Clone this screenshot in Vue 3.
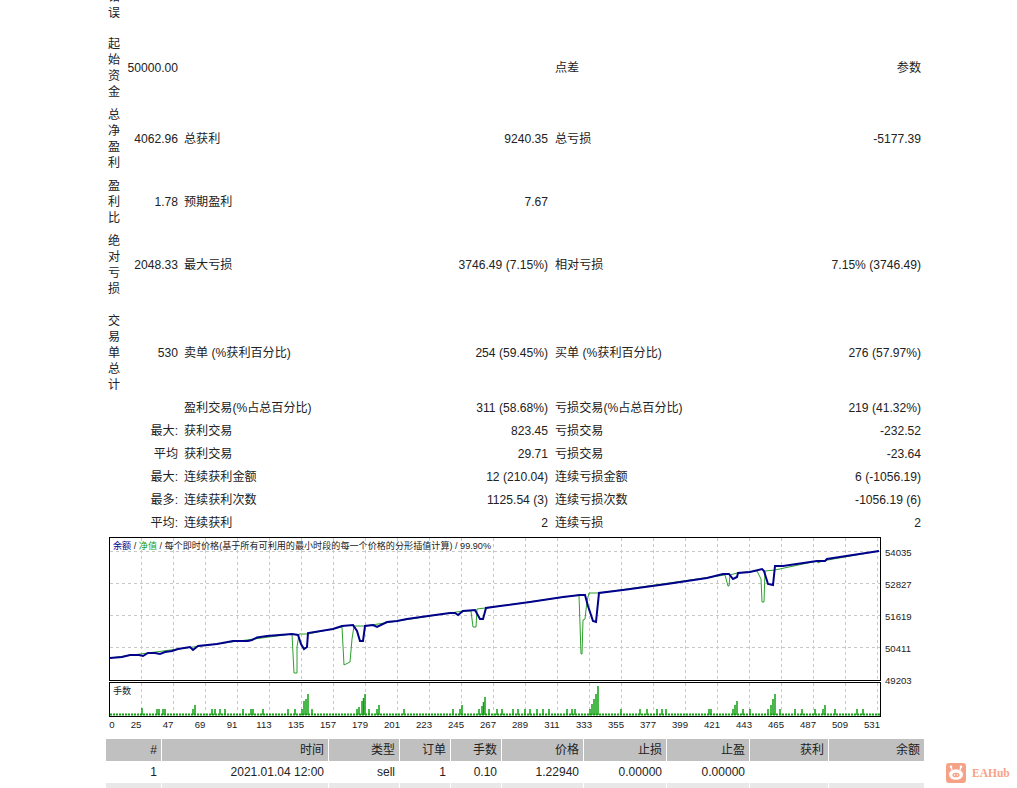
<template>
  <div class="page">
    <table class="stats">
      <colgroup>
        <col style="width: 16px" />
        <col style="width: 59px" />
        <col style="width: 371px" />
        <col />
      </colgroup>
      <tbody>
        <tr>
          <td class="label"><span v-for="c in '错误'" :key="c">{{ c }}</span></td>
          <td colspan="3"></td>
        </tr>
        <template v-for="row in tallRows" :key="row.label">
          <tr class="spacer" v-if="row.gap"><td colspan="4" :style="{ height: row.gap + 'px' }"></td></tr>
          <tr>
            <td class="label"><span v-for="c in row.label" :key="c">{{ c }}</span></td>
            <td class="num">{{ row.value }}</td>
            <td class="left-cell">
              <div class="split">
                <span>{{ row.a }}</span>
                <span>{{ row.aVal }}</span>
              </div>
            </td>
            <td>
              <div class="split">
                <span>{{ row.b }}</span>
                <span>{{ row.bVal }}</span>
              </div>
            </td>
          </tr>
        </template>
        <tr v-for="row in shortRows" :key="row.a + row.head">
          <td class="num" colspan="2">{{ row.head }}</td>
          <td class="left-cell">
            <div class="split">
              <span>{{ row.a }}</span>
              <span>{{ row.aVal }}</span>
            </div>
          </td>
          <td>
            <div class="split">
              <span>{{ row.b }}</span>
              <span>{{ row.bVal }}</span>
            </div>
          </td>
        </tr>
      </tbody>
    </table>

    <svg class="chart" width="1017" height="198" viewBox="0 0 1017 198">
      <g transform="translate(0 -537)">
        <rect x="109.5" y="538.5" width="771" height="143" fill="#fff" stroke="#000" />
        <rect x="109.5" y="683.5" width="771" height="34" fill="#fff" stroke="#000" />

        <g stroke="#c8c8c8" stroke-dasharray="3 3" fill="none">
          <line v-for="x in gridX" :key="'v' + x" :x1="x + 0.5" y1="539" :x2="x + 0.5" y2="681" />
          <line v-for="x in gridX" :key="'w' + x" :x1="x + 0.5" y1="684" :x2="x + 0.5" y2="717" />
          <line v-for="y in gridY" :key="'h' + y" x1="110" :y1="y + 0.5" x2="880" :y2="y + 0.5" />
        </g>

        <polyline :points="equityLine" fill="none" stroke="#2ca02c" stroke-width="1" />
        <polyline :points="balanceLine" fill="none" stroke="#00008b" stroke-width="2" />

        <line x1="110" y1="715.5" x2="880" y2="715.5" stroke="#0fa00f" stroke-width="2" stroke-dasharray="2 1" />
        <line
          v-for="bar in lotBars"
          :key="bar[0]"
          :x1="bar[0]"
          :y1="bar[1]"
          :x2="bar[0]"
          y2="716"
          stroke="#0fa00f"
          stroke-width="1.5"
        />

        <text class="tiny" x="113" y="550">
          <tspan fill="#00008b">余额</tspan>
          <tspan fill="#222"> / </tspan>
          <tspan fill="#18a018">净值</tspan>
          <tspan fill="#222"> / 每个即时价格(基于所有可利用的最小时段的每一个价格的分形插值计算) / 99.90%</tspan>
        </text>
        <text class="tiny" x="113" y="695" fill="#222">手数</text>

        <text v-for="t in priceTicks" :key="t.label" class="axis" x="885" :y="t.y + 3.5">{{ t.label }}</text>
        <text v-for="t in lotTicks" :key="t.label" class="axis" :x="t.x" y="728.5" text-anchor="middle">{{ t.label }}</text>
      </g>
    </svg>

    <table class="deals">
      <colgroup>
        <col v-for="w in dealCols" :key="w.name" :style="{ width: w.width + 'px' }" />
      </colgroup>
      <thead>
        <tr>
          <th v-for="w in dealCols" :key="w.name">{{ w.name }}</th>
        </tr>
      </thead>
      <tbody>
        <tr v-for="(deal, i) in deals" :key="i" :class="{ odd: i % 2 === 1 }">
          <td v-for="(cell, j) in deal" :key="j">{{ cell }}</td>
        </tr>
      </tbody>
    </table>

    <div class="watermark">
      <svg width="20" height="20" viewBox="0 0 20 20">
        <rect width="20" height="20" rx="3" fill="#f6a287" />
        <path d="M6 7 L5 4 M14 7 L15 4" stroke="#fff" stroke-width="1.4" />
        <circle cx="5" cy="3.8" r="1.3" fill="#fff" />
        <circle cx="15" cy="3.8" r="1.3" fill="#fff" />
        <ellipse cx="10" cy="11.5" rx="7" ry="5.2" fill="#fff" />
        <ellipse cx="10" cy="12" rx="3.6" ry="2.3" fill="#f6a287" />
        <circle cx="8.6" cy="12" r="0.8" fill="#fff" />
        <circle cx="11.4" cy="12" r="0.8" fill="#fff" />
      </svg>
      <span>EAHub</span>
    </div>
  </div>
</template>

<script setup>
const tallRows = [
  { label: '起始资金', value: '50000.00', a: '', aVal: '', b: '点差', bVal: '参数', gap: 8 },
  { label: '总净盈利', value: '4062.96', a: '总获利', aVal: '9240.35', b: '总亏损', bVal: '-5177.39' },
  { label: '盈利比', value: '1.78', a: '预期盈利', aVal: '7.67', b: '', bVal: '' },
  { label: '绝对亏损', value: '2048.33', a: '最大亏损', aVal: '3746.49 (7.15%)', b: '相对亏损', bVal: '7.15% (3746.49)' },
  { label: '交易单总计', value: '530', a: '卖单 (%获利百分比)', aVal: '254 (59.45%)', b: '买单 (%获利百分比)', bVal: '276 (57.97%)', gap: 9 }
]

const shortRows = [
  { head: '', a: '盈利交易(%占总百分比)', aVal: '311 (58.68%)', b: '亏损交易(%占总百分比)', bVal: '219 (41.32%)' },
  { head: '最大:', a: '获利交易', aVal: '823.45', b: '亏损交易', bVal: '-232.52' },
  { head: '平均', a: '获利交易', aVal: '29.71', b: '亏损交易', bVal: '-23.64' },
  { head: '最大:', a: '连续获利金额', aVal: '12 (210.04)', b: '连续亏损金额', bVal: '6 (-1056.19)' },
  { head: '最多:', a: '连续获利次数', aVal: '1125.54 (3)', b: '连续亏损次数', bVal: '-1056.19 (6)' },
  { head: '平均:', a: '连续获利', aVal: '2', b: '连续亏损', bVal: '2' }
]

const gridX = Array.from({ length: 24 }, (_, i) => 141 + i * 32)
const gridY = [552, 584, 616, 648]

const priceTicks = [
  { label: '54035', y: 553 },
  { label: '52827', y: 585 },
  { label: '51619', y: 617 },
  { label: '50411', y: 649 },
  { label: '49203', y: 681 }
]

const lotTicks = [
  { label: '0', x: 112 },
  ...Array.from({ length: 24 }, (_, i) => ({ label: String(25 + i * 22), x: 136 + i * 32 }))
]

// 余额 line, read off the reference in page coordinates
const balance = [
  [110, 659], [122, 658], [130, 656], [139, 656], [143, 657], [148, 654], [155, 654], [160, 655],
  [165, 653], [172, 652], [178, 650], [190, 648], [193, 651], [198, 647], [217, 645], [233, 642],
  [248, 642], [252, 641], [257, 638.5], [267, 637], [292, 635], [298, 636], [301, 645], [304, 650],
  [307, 648], [308, 634], [333, 630], [342, 627], [353, 626], [357, 632], [360, 642], [363, 642],
  [365, 627], [373, 626], [377, 628], [387, 623], [397, 622], [407, 620], [428, 617], [450, 614],
  [455, 614], [458, 616], [463, 612], [475, 611], [480, 620], [483, 620], [486, 609], [500, 607],
  [530, 603], [563, 598], [580, 596], [585, 596], [588, 607], [593, 622], [596, 623], [599, 594],
  [623, 591], [667, 585], [707, 579], [723, 575], [729, 575], [733, 580], [737, 578], [738, 574],
  [750, 573], [762, 570], [764, 572], [768, 585], [773, 586], [775, 567], [783, 567], [817, 562],
  [825, 562], [827, 560], [879, 552]
]

// 净值 line: follows the balance except for the drawdown dips
const equity = [
  [110, 659], [292, 635], [294, 674], [297, 674], [297, 648], [299, 635], [308, 635], [342, 628],
  [344, 666], [350, 663], [352, 640], [354, 627], [365, 627], [463, 612], [471, 612], [473, 628],
  [476, 628], [477, 610], [485, 609], [579, 596], [580, 625], [581, 655], [582, 655], [583, 621],
  [585, 620], [587, 602], [589, 594], [599, 594], [725, 576], [728, 587], [729, 587], [730, 576],
  [737, 574], [757, 572], [761, 580], [762, 603], [764, 603], [765, 572], [775, 571], [817, 562],
  [818, 564], [822, 562], [879, 552]
]

const toPoints = (list) => list.map((p) => p.join(',')).join(' ')
const balanceLine = toPoints(balance)
const equityLine = toPoints(equity)

const lotBars = [
  [142, 709], [157, 710], [159, 710], [163, 710], [165, 710], [193, 710], [195, 706], [212, 710],
  [215, 710], [220, 710], [225, 710], [243, 710], [251, 710], [253, 710], [263, 710], [288, 710],
  [295, 710], [302, 710], [304, 702], [306, 700], [308, 695], [312, 710], [357, 710], [359, 708],
  [362, 702], [363.5, 699], [365, 695], [369, 710], [377, 710], [379, 706], [404, 710], [453, 710],
  [460, 710], [462, 706], [479, 710], [482, 707], [483.5, 703], [485, 698], [489, 710], [497, 710],
  [502, 710], [513, 710], [518, 710], [525, 710], [530, 710], [537, 710], [543, 710], [549, 710],
  [567, 710], [572, 710], [575, 710], [590, 710], [592, 705], [594, 700], [596, 695], [598, 687],
  [621, 710], [640, 710], [647, 710], [657, 710], [662, 710], [666, 710], [709, 710], [711, 710],
  [733, 710], [735, 706], [737, 702], [743, 710], [750, 710], [768, 710], [771, 706], [773, 700],
  [775, 695], [780, 710], [795, 710], [802, 710], [815, 710], [823, 710], [825, 706], [835, 710],
  [857, 710], [863, 710]
]

const dealCols = [
  { name: '#', width: 55 },
  { name: '时间', width: 167 },
  { name: '类型', width: 71 },
  { name: '订单', width: 51 },
  { name: '手数', width: 51 },
  { name: '价格', width: 82 },
  { name: '止损', width: 83 },
  { name: '止盈', width: 83 },
  { name: '获利', width: 79 },
  { name: '余额', width: 96 }
]

const deals = [
  ['1', '2021.01.04 12:00', 'sell', '1', '0.10', '1.22940', '0.00000', '0.00000', '', ''],
  ['', '', '', '', '', '', '', '', '', '']
]
</script>

<style>
html,
body {
  margin: 0;
  background: #fff;
  overflow: hidden;
}
</style>

<style scoped>
.page {
  position: relative;
  width: 1017px;
  height: 788px;
  overflow: hidden;
  font-family: "Liberation Sans", "Noto Sans CJK SC", sans-serif;
  font-size: 12.1px;
  line-height: 16px;
  color: #222;
}

.stats {
  table-layout: fixed;
  width: 818px;
  margin: -15px 0 0 106px;
  border-collapse: collapse;
}

.stats td {
  padding: 3.5px 3px;
  vertical-align: middle;
}

.stats .spacer td {
  padding: 0;
}

.stats .label {
  padding: 3.5px 0;
  text-align: center;
}

.label span {
  display: block;
}

.stats .num {
  text-align: right;
}

.stats .left-cell {
  padding-right: 4px;
}

.split {
  display: flex;
  justify-content: space-between;
}

.chart {
  display: block;
  margin-top: 2px;
}

.tiny {
  font-size: 9.1px;
}

.axis {
  font-size: 9.6px;
  fill: #222;
}

.deals {
  table-layout: fixed;
  width: 818px;
  margin: 5px 0 0 106px;
  border-collapse: separate;
  border-spacing: 0;
  font-size: 12px;
}

.deals th,
.deals td {
  height: 22px;
  padding: 0 4px 0 0;
  border-left: 1px solid #fff;
  font-weight: 400;
  text-align: right;
  box-sizing: border-box;
}

.deals th {
  background: #c0c0c0;
}

.deals th:first-child,
.deals td:first-child {
  border-left: 0;
}

.deals .odd td {
  background: #e8e8e8;
}

.watermark {
  position: absolute;
  left: 946px;
  top: 763px;
  display: flex;
  align-items: center;
  gap: 6px;
  color: #f6a287;
  font-family: "Liberation Serif", serif;
  font-size: 11.5px;
  font-weight: 700;
}
</style>
